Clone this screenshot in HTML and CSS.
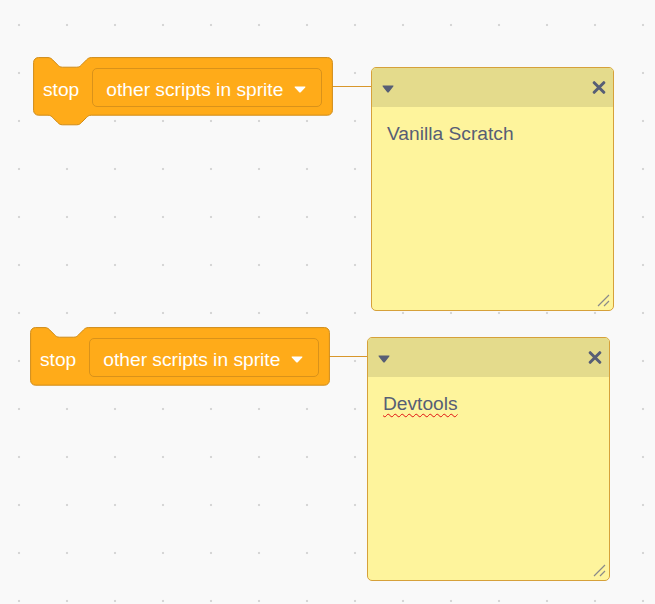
FILE: index.html
```
<!DOCTYPE html>
<html>
<head>
<meta charset="utf-8">
<link rel="stylesheet" href="styles.css">
</head>
<body>
<div class="workspace">
  <div class="link link-1"></div>
  <div class="link link-2"></div>

  <div class="block block-1">
    <svg class="block-shape" width="300" height="70" viewBox="0 0 250 58.333">
      <path d="M0.5,4.5 A4,4 0 0,1 4.5,0.5 H12.5 c2,0 3,1 4,2 l4,4 c1,1 2,2 4,2 h12 c2,0 3,-1 4,-2 l4,-4 c1,-1 2,-2 4,-2 H245.5 a4,4 0 0,1 4,4 V44.5 a4,4 0 0,1 -4,4 H48.5 c-2,0 -3,1 -4,2 l-4,4 c-1,1 -2,2 -4,2 h-12 c-2,0 -3,-1 -4,-2 l-4,-4 c-1,-1 -2,-2 -4,-2 H4.5 a4,4 0 0,1 -4,-4 z"/>
    </svg>
    <span class="label">stop</span>
    <div class="dropdown">
      <span class="dropdown-text">other scripts in sprite</span>
      <svg class="caret" width="12" height="7" viewBox="0 0 12 7"><path d="M1.2,0.6 H10.8 Q12,0.6 11.2,1.6 L6.8,6.2 Q6,7 5.2,6.2 L0.8,1.6 Q0,0.6 1.2,0.6 z"/></svg>
    </div>
  </div>

  <div class="block block-2">
    <svg class="block-shape" width="300" height="70" viewBox="0 0 250 58.333">
      <path d="M0.5,4.5 A4,4 0 0,1 4.5,0.5 H12.5 c2,0 3,1 4,2 l4,4 c1,1 2,2 4,2 h12 c2,0 3,-1 4,-2 l4,-4 c1,-1 2,-2 4,-2 H245.5 a4,4 0 0,1 4,4 V44.5 a4,4 0 0,1 -4,4 H4.5 a4,4 0 0,1 -4,-4 z"/>
    </svg>
    <span class="label">stop</span>
    <div class="dropdown">
      <span class="dropdown-text">other scripts in sprite</span>
      <svg class="caret" width="12" height="7" viewBox="0 0 12 7"><path d="M1.2,0.6 H10.8 Q12,0.6 11.2,1.6 L6.8,6.2 Q6,7 5.2,6.2 L0.8,1.6 Q0,0.6 1.2,0.6 z"/></svg>
    </div>
  </div>

  <div class="comment comment-1">
    <div class="comment-bar">
      <svg class="comment-toggle" width="12" height="8" viewBox="0 0 12 8"><path d="M1,0.5 H11 Q12,0.5 11.3,1.4 L6.8,7.2 Q6,8 5.2,7.2 L0.7,1.4 Q0,0.5 1,0.5 z"/></svg>
      <svg class="comment-close" width="14" height="13" viewBox="0 0 14 13"><path d="M2.2,1.7 L11.8,11.3 M11.8,1.7 L2.2,11.3"/></svg>
    </div>
    <div class="comment-body">
      <p class="comment-text">Vanilla Scratch</p>
      <svg class="grip" width="14" height="14" viewBox="0 0 14 14"><path d="M1,13 L12,2 M7,13 L12,8"/></svg>
    </div>
  </div>

  <div class="comment comment-2">
    <div class="comment-bar">
      <svg class="comment-toggle" width="12" height="8" viewBox="0 0 12 8"><path d="M1,0.5 H11 Q12,0.5 11.3,1.4 L6.8,7.2 Q6,8 5.2,7.2 L0.7,1.4 Q0,0.5 1,0.5 z"/></svg>
      <svg class="comment-close" width="14" height="13" viewBox="0 0 14 13"><path d="M2.2,1.7 L11.8,11.3 M11.8,1.7 L2.2,11.3"/></svg>
    </div>
    <div class="comment-body">
      <p class="comment-text"><span class="misspelled">Devtools</span></p>
      <svg class="grip" width="14" height="14" viewBox="0 0 14 14"><path d="M1,13 L12,2 M7,13 L12,8"/></svg>
    </div>
  </div>
</div>
</body>
</html>
```

FILE: styles.css
```
html, body {
  margin: 0;
  padding: 0;
}

body {
  width: 655px;
  height: 604px;
  overflow: hidden;
  background: #f9f9f9;
  font-family: "Liberation Sans", Arial, Helvetica, sans-serif;
}

.workspace {
  position: relative;
  width: 655px;
  height: 604px;
  background-color: #f9f9f9;
  background-image: radial-gradient(circle at center, #d6d6d6 0, #d6d6d6 0.9px, rgba(214,214,214,0) 1.6px);
  background-size: 48px 48px;
  background-position: -5px 1px;
}

/* links between blocks and comments */
.link {
  position: absolute;
  height: 1px;
  background: #d8972c;
}
.link-1 { left: 330px; top: 86px; width: 42px; }
.link-2 { left: 326px; top: 356px; width: 42px; }

/* blocks */
.block {
  position: absolute;
  width: 299px;
  height: 59px;
  display: flex;
  align-items: center;
  padding-left: 10px;
  padding-top: 1px;
  box-sizing: border-box;
  gap: 13px;
}
.block-1 { left: 33px; top: 57px; }
.block-2 { left: 30px; top: 327px; }

.block-shape {
  position: absolute;
  left: -0.5px;
  top: -0.5px;
  overflow: visible;
}
.block-shape path {
  fill: #ffab19;
  stroke: #cf8b17;
  stroke-width: 1px;
  vector-effect: non-scaling-stroke;
}

.label {
  position: relative;
  color: #ffffff;
  font-size: 19.2px;
  line-height: 22px;
  padding-top: 5px;
}

.dropdown {
  position: relative;
  height: 39px;
  box-sizing: border-box;
  display: flex;
  align-items: center;
  gap: 11px;
  padding: 5px 15px 0 13px;
  border: 1px solid #d9921a;
  border-radius: 5px;
  background: #ffab19;
}
.dropdown-text {
  color: #ffffff;
  font-size: 19.2px;
  line-height: 22px;
}
.caret {
  margin-top: -1px;
}
.caret path {
  fill: #ffffff;
}

/* comments */
.comment {
  position: absolute;
  width: 243px;
  height: 244px;
  box-sizing: border-box;
  border: 1px solid #d6a13a;
  border-radius: 5px;
  overflow: hidden;
  display: flex;
  flex-direction: column;
  background: #fef49c;
}
.comment-1 { left: 371px; top: 67px; }
.comment-2 { left: 367px; top: 337px; }

.comment-bar {
  height: 39px;
  flex: none;
  background: #e4db8c;
  display: flex;
  align-items: center;
  justify-content: space-between;
  padding: 0 7px 0 10px;
}
.comment-toggle {
  margin-top: 2px;
}
.comment-toggle path {
  fill: #575e75;
}
.comment-close path {
  stroke: #575e75;
  stroke-width: 3px;
  stroke-linecap: round;
  fill: none;
}

.comment-body {
  position: relative;
  flex: 1;
  padding: 16px 15px 0 15px;
}
.comment-text {
  margin: 0;
  color: #575e75;
  font-size: 19.2px;
  line-height: 22px;
}
.misspelled {
  text-decoration: underline wavy #e01010;
  text-decoration-thickness: 1px;
  text-underline-offset: 3px;
}

.grip {
  position: absolute;
  right: 2px;
  bottom: 3px;
}
.grip path {
  stroke: #8a8a8a;
  stroke-width: 1.2px;
  fill: none;
}
```
